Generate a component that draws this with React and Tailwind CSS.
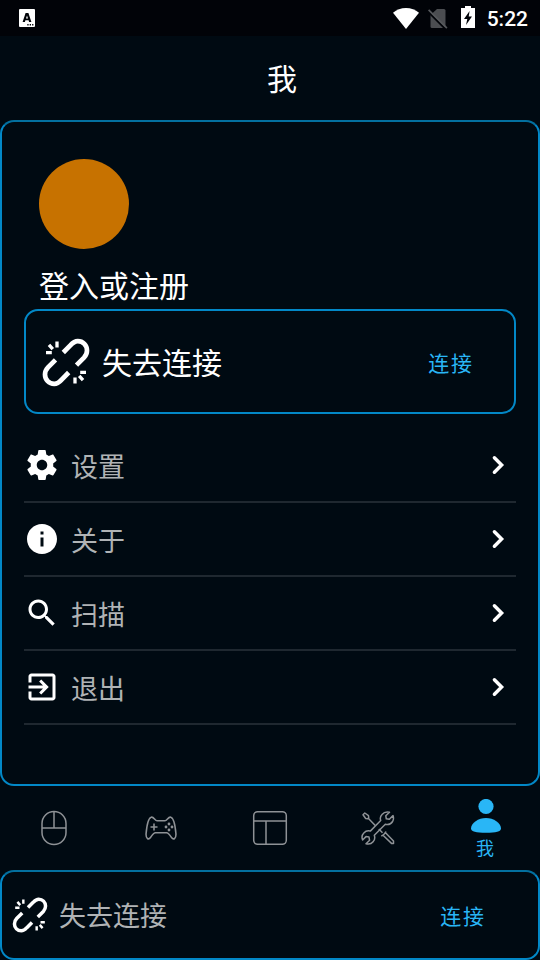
import React from "react";

const LINK_HALF = "M21.3 14.3L28.3 7.2C31 4.2 33 2.9 35.8 2.9C41 2.9 45 7 45 12.3C45 15.3 44 17.4 42 19.5L34.5 27";
const LINK_SPARKS = "M15 3.4V9.2M7 6.6L10.8 11M4 14.5H9.8";

function BrokenLink({ className }) {
  return (
    <svg viewBox="0 0 48 48.6" className={className} fill="none" stroke="#fff" strokeWidth="4.7">
      <g>
        <path d={LINK_HALF} />
        <path strokeWidth="3.3" d={LINK_SPARKS} />
      </g>
      <g transform="rotate(180 24 24.3)">
        <path d={LINK_HALF} />
        <path strokeWidth="3.3" d={LINK_SPARKS} />
      </g>
    </svg>
  );
}

function MaterialIcon({ d }) {
  return (
    <svg viewBox="0 0 24 24" className="h-9 w-9 shrink-0" fill="#fff">
      <path d={d} />
    </svg>
  );
}

const MENU = [
  {
    label: "设置",
    d: "M19.43 12.98c.04-.32.07-.64.07-.98s-.03-.66-.07-.98l2.11-1.65c.19-.15.24-.42.12-.64l-2-3.46c-.12-.22-.39-.3-.61-.22l-2.49 1c-.52-.4-1.08-.73-1.69-.98l-.38-2.65C14.46 2.18 14.25 2 14 2h-4c-.25 0-.46.18-.49.42l-.38 2.65c-.61.25-1.17.59-1.69.98l-2.49-1c-.23-.09-.49 0-.61.22l-2 3.46c-.13.22-.07.49.12.64l2.11 1.65c-.04.32-.07.65-.07.98s.03.66.07.98l-2.11 1.65c-.19.15-.24.42-.12.64l2 3.46c.12.22.39.3.61.22l2.49-1c.52.4 1.08.73 1.69.98l.38 2.65c.03.24.24.42.49.42h4c.25 0 .46-.18.49-.42l.38-2.65c.61-.25 1.17-.59 1.69-.98l2.49 1c.23.09.49 0 .61-.22l2-3.46c.12-.22.07-.49-.12-.64l-2.11-1.65zM12 15.5c-1.93 0-3.5-1.57-3.5-3.5s1.57-3.5 3.5-3.5 3.5 1.57 3.5 3.5-1.57 3.5-3.5 3.5z",
  },
  {
    label: "关于",
    d: "M12 2C6.48 2 2 6.48 2 12s4.48 10 10 10 10-4.48 10-10S17.52 2 12 2zm1 15h-2v-6h2v6zm0-8h-2V7h2v2z",
  },
  {
    label: "扫描",
    d: "M15.5 14h-.79l-.28-.27C15.41 12.59 16 11.11 16 9.5 16 5.91 13.09 3 9.5 3S3 5.91 3 9.5 5.91 16 9.5 16c1.61 0 3.09-.59 4.23-1.57l.27.28v.79l5 4.99L20.49 19l-4.99-5zm-6 0C7.01 14 5 11.99 5 9.5S7.01 5 9.5 5 14 7.01 14 9.5 11.99 14 9.5 14z",
  },
  {
    label: "退出",
    d: "M10.09 15.59L11.5 17l5-5-5-5-1.41 1.41L12.67 11H3v2h9.67l-2.58 2.59zM19 3H5c-1.11 0-2 .9-2 2v4h2V5h14v14H5v-4H3v4c0 1.1.89 2 2 2h14c1.1 0 2-.9 2-2V5c0-1.1-.9-2-2-2z",
  },
];

function StatusBar() {
  return (
    <div className="flex h-9 items-center bg-[#010308] pl-[19px] pr-3">
      <svg viewBox="0 0 16 18" className="h-[18px] w-4">
        <rect width="16" height="18" rx="1" fill="#fff" />
        <path fillRule="evenodd" fill="#010308" d="M6.6 4h2.8l3 9h-2.3l-.5-1.7H6.4L5.9 13H3.6zM8 6.4L7 9.6h2z" />
        <path fill="#010308" d="M8.3 15h1.3v1.4H8.3zM10.7 15H12v1.4h-1.3zM13.1 15h1.3v1.4h-1.3z" />
      </svg>
      <svg viewBox="0 0 26 21" className="ml-auto h-[21px] w-[26px]" fill="#fff">
        <path d="M0 4.8C3.6 1.8 8 0 13 0s9.4 1.8 13 4.8L13 21z" />
      </svg>
      <svg viewBox="0 0 20 21" className="ml-[9px] h-[21px] w-5">
        <path d="M9 1h7a1.5 1.5 0 0 1 1.5 1.5v16A1.5 1.5 0 0 1 16 20H4a1.5 1.5 0 0 1-1.5-1.5V7z" fill="#4b4d51" />
        <path d="M0 3.6L18 21.600" stroke="#010308" strokeWidth="2" />
        <path d="M.6 1.800L18.900 20.100" stroke="#56585c" strokeWidth="1.700" />
      </svg>
      <svg viewBox="0 0 14 22" className="mb-0.5 ml-[13px] h-[22px] w-3.5">
        <path d="M4 0h6v2h4v20H0V2h4z" fill="#fff" />
        <path d="M8.600 5L3 13h3.300L5 19l6-8.500H7.700z" fill="#010308" />
      </svg>
      <span className="ml-[11px] mt-0.5 w-[42px] whitespace-nowrap text-right font-[Roboto] text-[21px] font-medium leading-none">5:22</span>
    </div>
  );
}

function NavBar() {
  return (
    <nav className="grid h-[84px] grid-cols-5 items-center justify-items-center text-[#8e9296]">
      <svg viewBox="0 0 26 36" className="h-9 w-[26px]" fill="none" stroke="currentColor" strokeWidth="1.500">
        <rect x="1" y="1.500" width="24" height="33" rx="12" />
        <path d="M1 18H25M13 1.500V18" />
      </svg>
      <svg viewBox="0 0 32 24" className="mr-0.5 h-6 w-8" fill="none" stroke="currentColor" strokeWidth="1.600" strokeLinejoin="round">
        <path d="M6.200 1.200C8.500.2 10 4.700 12 4.700H20C22 4.700 23.500.2 25.800 1.200C29 2 30.500 13 30.900 17.500C31.300 23 28.400 24 26.500 21.600C24.500 18.500 23.500 16.800 21.500 16.800H10.500C8.500 16.800 7.500 18.500 5.500 21.600C3.600 24 .7 23 1.100 17.500C1.500 13 3 2 6.200 1.200Z" />
        <path d="M9 7.500V14.500M5.500 11H12.500" />
        <g fill="currentColor" stroke="none">
          <circle cx="24" cy="8" r="1.400" />
          <circle cx="24" cy="14" r="1.400" />
          <circle cx="21" cy="11" r="1.400" />
          <circle cx="27" cy="11" r="1.400" />
        </g>
      </svg>
      <svg viewBox="0 0 36 36" className="h-9 w-9" fill="none" stroke="currentColor" strokeWidth="1.500">
        <rect x="1.700" y="1.700" width="32.600" height="32.600" rx="4" />
        <path d="M2 11H34M14 11V34" />
      </svg>
      <svg viewBox="0 0 34 34" className="h-[34px] w-[34px]" fill="none" stroke="currentColor" strokeWidth="1.500" strokeLinejoin="round">
        <path d="M13.300 24.200L24.300 13.200C27 14 30 13 31.600 10.500C32.700 8.500 32.800 6.700 32 4.600L28.300 8.300L25.300 7.800L24.800 4.800L28.500 1.300C25.500.7 22.800 1.300 21 3.400C19.300 5.200 19 7.500 19.700 9.500L9.300 20.100C7 19.500 4.600 20 2.800 22C1 23.800.6 26.500 1.600 29L5 25.600L8 26.100L8.600 29.300L5 32.700C7.500 33.500 10.400 32.800 12.100 30.800C13.800 28.900 14.100 26.500 13.300 24.200Z" />
        <path d="M2 3.700L3.800 2L7.500 4.700L7.700 6.700L6.700 7.700L4.700 7.500ZM7 7L14.500 14.800M17.800 18L21.500 21.700M20.300 25.200C22.500 24 24 22.500 25 20.500M22 24.300L30.500 32.400H32.500V30L24.500 21.700" />
      </svg>
      <div className="flex h-[84px] flex-col items-center pt-[13px] text-[#29b6f6]">
        <svg viewBox="0 0 30 34" className="h-[34px] w-[30px]" fill="currentColor">
          <circle cx="15" cy="7.500" r="7.600" />
          <path d="M15 19C22.500 19 30 24 30 29.500C30 32.500 25 33.800 15 33.800S0 32.500 0 29.500C0 24 7.500 19 15 19Z" />
        </svg>
        <span className="mr-0.5 mt-[5px] text-[18px] leading-[18px]">我</span>
      </div>
    </nav>
  );
}

export default function App() {
  return (
    <div className="flex h-[960px] w-[540px] flex-col overflow-hidden bg-[#000a12] font-['Noto_Sans_CJK_SC',sans-serif] text-white">
      <StatusBar />
      <header className="flex h-[84px] items-center justify-center px-6 pb-0.5">
        <h1 className="pl-6 text-[30px] leading-9">我</h1>
      </header>
      <main className="h-[666px] rounded-[14px] border-2 border-[#0288c7] border-t-[#03709f] px-[22px] pt-[37px]">
        <div className="ml-[15px] h-[90px] w-[90px] rounded-full bg-[#c77200]" />
        <div className="ml-[15px] mt-[15px] h-[45px] text-[30px] leading-10">登入或注册</div>
        <section className="flex h-[105px] items-center rounded-[14px] border-2 border-[#0288c7] pl-4 pr-10">
          <BrokenLink className="mt-0.5 h-[49px] w-12" />
          <span className="mb-0.5 ml-3 text-[30px] leading-9">失去连接</span>
          <button className="ml-auto mt-0.5 text-[21px] tracking-[1.9px] text-[#29b6f6]">连接</button>
        </section>
        <ul className="pt-[15px]">
          {MENU.map(({ label, d }) => (
            <li key={label} className="flex h-[74px] items-center border-b-2 border-[#1f2830]">
              <MaterialIcon d={d} />
              <span className="ml-[11px] mt-0.5 text-[27px] leading-9 text-[#b0b3b5]">{label}</span>
              <svg viewBox="0 0 24 24" className="ml-auto h-9 w-9" fill="none" stroke="#fff" strokeWidth="2.3" strokeLinecap="round">
                <path d="M9.600 7.200L14.400 12L9.600 16.800" />
              </svg>
            </li>
          ))}
        </ul>
      </main>
      <NavBar />
      <footer className="flex h-[90px] items-center rounded-[14px] border-2 border-[#0288c7] border-t-[#03709f] pl-[10px] pr-[52px]">
        <BrokenLink className="h-9 w-9" />
        <span className="ml-[11px] text-[27px] leading-9 text-[#b0b3b5]">失去连接</span>
        <button className="ml-auto mt-0.5 text-[21px] tracking-[1.9px] text-[#29b6f6]">连接</button>
      </footer>
    </div>
  );
}
